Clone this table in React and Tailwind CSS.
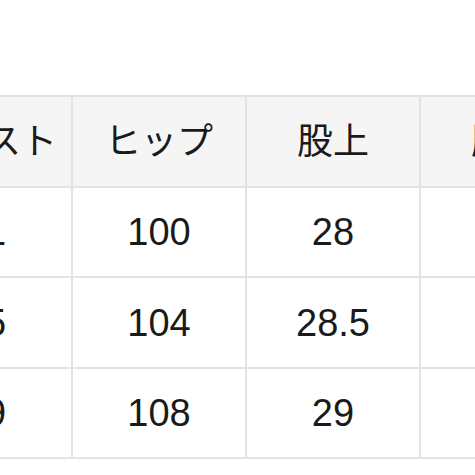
import React from "react";

const headers = ["ウエスト", "ヒップ", "股上", "股下"];
const rows = [
  ["71", "100", "28", ""],
  ["75", "104", "28.5", ""],
  ["79", "108", "29", ""],
];
const rowHeights = ["h-[88px]", "h-[89px]", "h-[88px]"];

export default function App() {
  return (
    <div
      className="w-[475px] h-[475px] overflow-hidden bg-white text-[#1a1a1a]"
      style={{ fontFamily: '"Liberation Sans", "Noto Sans CJK JP", sans-serif' }}
    >
      <div className="pt-[95px] ml-[-103px]">
        <div className="inline-grid grid-cols-[172px_172px_172px_172px] gap-[2px] p-[2px] bg-[#e3e3e3]">
          {headers.map((h) => (
            <div
              key={h}
              className="h-[89px] bg-[#f5f5f5] flex items-center justify-center text-[36px] leading-none whitespace-nowrap"
            >
              {h}
            </div>
          ))}
          {rows.map((r, i) =>
            r.map((c, j) => (
              <div
                key={i + "-" + j}
                className={`${rowHeights[i]} bg-white flex items-center justify-center text-[38px] leading-none`}
              >
                {c}
              </div>
            ))
          )}
        </div>
      </div>
    </div>
  );
}
